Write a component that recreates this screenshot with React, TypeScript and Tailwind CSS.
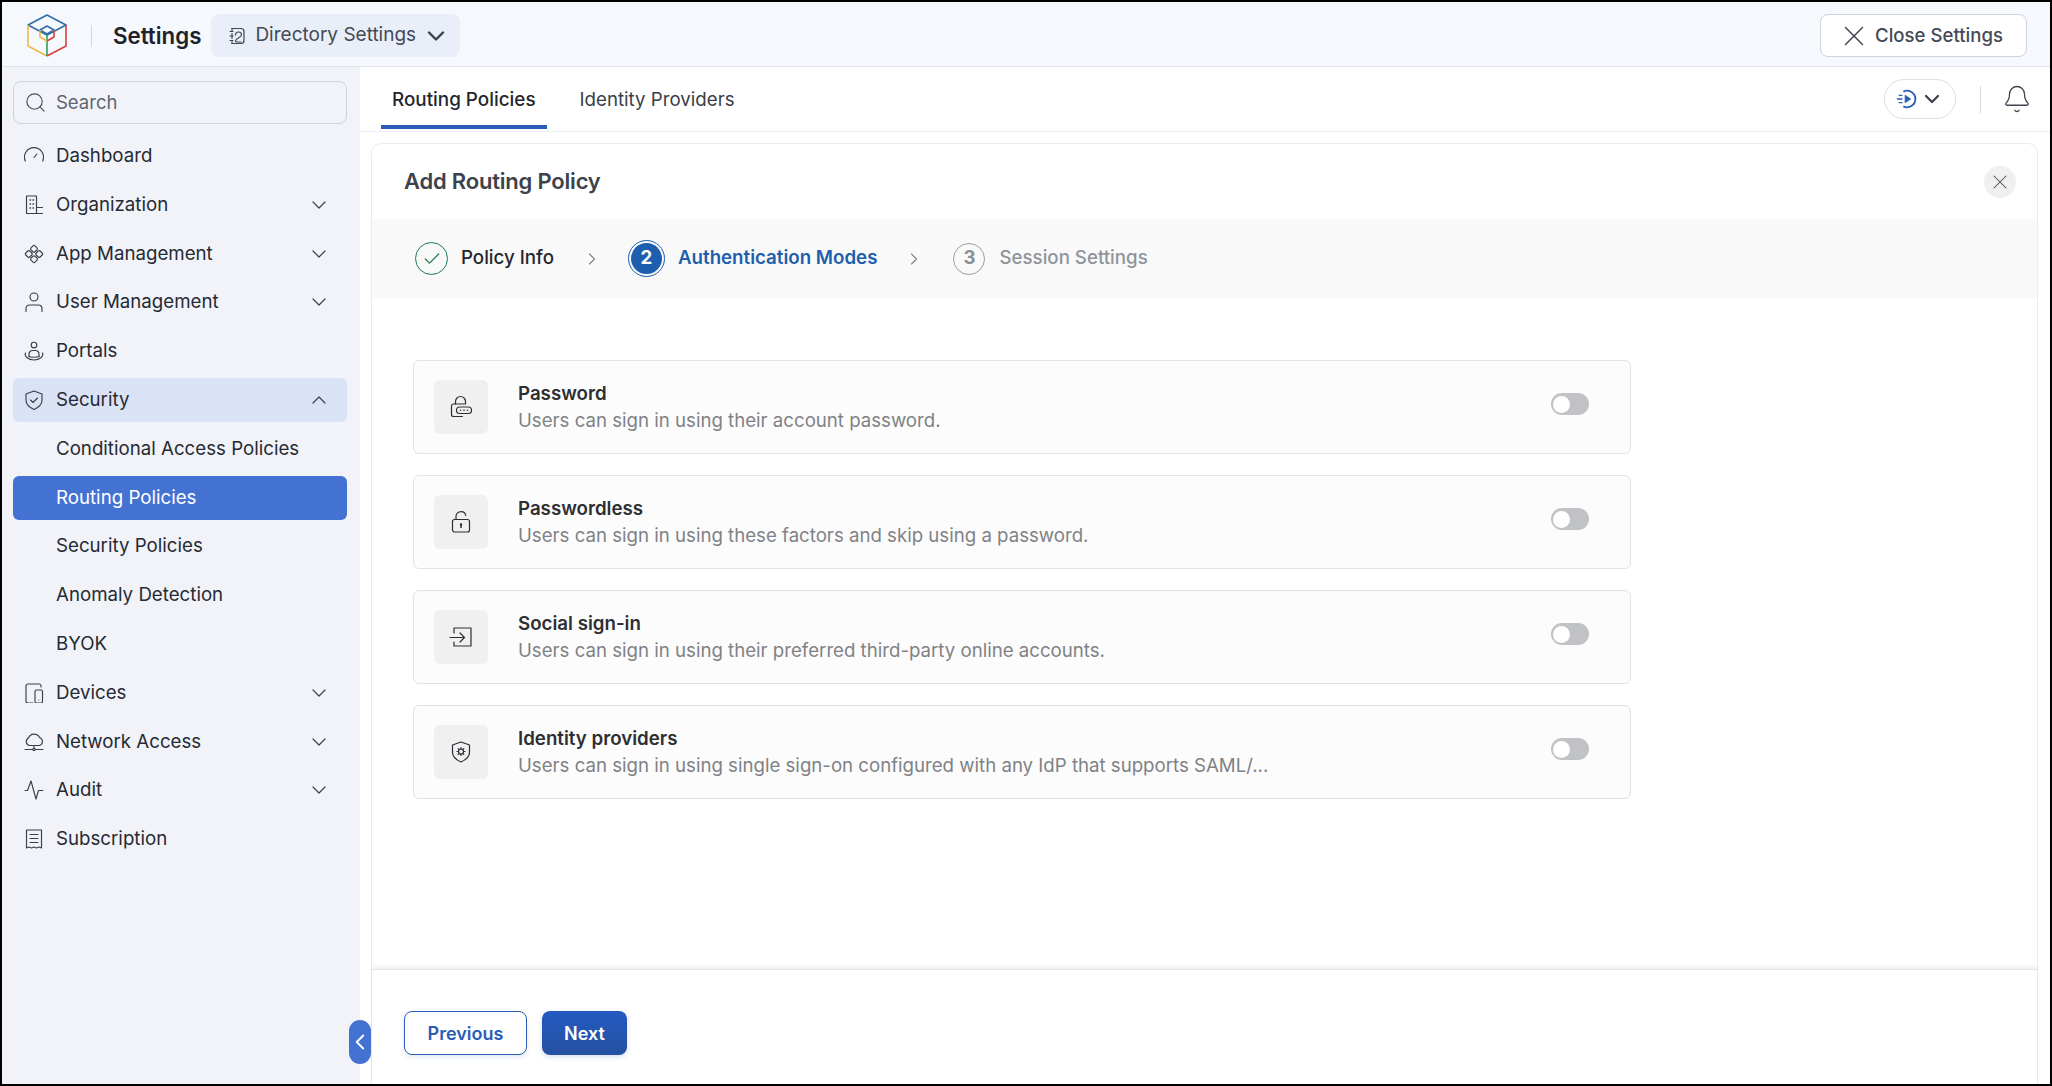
import { ChevronDown, ChevronLeft, ChevronRight, ChevronUp, Search, X, Check, Bell } from "lucide-react";
import { ReactNode } from "react";

// --- Icons ---
const Svg = ({ children, className = "w-[20px] h-[20px]" }: { children: ReactNode; className?: string }) => (
  <svg viewBox="0 0 20 20" fill="none" stroke="currentColor" strokeWidth="1.15" strokeLinecap="round" strokeLinejoin="round" className={className}>
    {children}
  </svg>
);

const Logo = () => (
  <svg viewBox="0 0 40 44" fill="none" strokeWidth="1.6" strokeLinejoin="round" className="w-[40px] h-[44px]">
    <path d="M1 11 20 1l19 10-19 10z" stroke="#2f6ea8" />
    <path d="M1 11v21l19 10" stroke="#f0b84a" />
    <path d="M39 11v21L20 42" stroke="#d9423c" />
    <path d="M20 21v21" stroke="#2e9e5b" />
    <path d="M13 16l7-4 7 4-7 4z" stroke="#2f6ea8" />
    <path d="M13 16v7l7 4" stroke="#f0b84a" />
    <path d="M27 16v7l-7 4" stroke="#d9423c" />
  </svg>
);

const DirectoryIcon = () => (
  <svg viewBox="0 0 20 20" fill="none" stroke="#3f4654" strokeWidth="1.2" strokeLinecap="round" className="w-[20px] h-[20px]">
    <path d="M5 2.500h9a3 3 0 0 1 3 3v9a3 3 0 0 1-3 3H5" />
    <path d="M5 2.500v2M5 7.500v5M5 15.500v2" />
    <path d="M3 5.500h3M3 10h3M3 14.500h3" />
    <path d="M8.500 9c0-4 6-4 6 0 0 2.500-6 3-6 6 0 .8.600 1 1.200 1H14" />
  </svg>
);

const iconClass = "w-[20px] h-[20px]";

const icons: Record<string, ReactNode> = {
  dashboard: (
    <Svg className={iconClass}>
      <path d="M1.300 15a9.500 9.500 0 1 1 17.400 0" />
      <path d="M10 11.500 13 8" />
    </Svg>
  ),
  organization: (
    <Svg className={iconClass}>
      <path d="M12.500 18.500H2.500V1h10v17.500" />
      <path d="M6 5h.5M9 5h.5M6 9h.5M9 9h.5M6 13h.5M9 13h.5" strokeWidth="1.500" />
      <path d="M12.500 12.500h6M12.500 18.500h6" />
    </Svg>
  ),
  apps: (
    <Svg className={iconClass}>
      <rect x="7.200" y="2" width="5.600" height="5.600" rx="1.400" transform="rotate(45 10 4.800)" />
      <rect x="7.200" y="12.400" width="5.600" height="5.600" rx="1.400" transform="rotate(45 10 15.200)" />
      <rect x="2" y="7.200" width="5.600" height="5.600" rx="1.400" transform="rotate(45 4.800 10)" />
      <rect x="12.400" y="7.200" width="5.600" height="5.600" rx="1.400" transform="rotate(45 15.200 10)" />
    </Svg>
  ),
  user: (
    <Svg className={iconClass}>
      <circle cx="10" cy="5" r="4" />
      <path d="M2 19.500V16.500a3.500 3.500 0 0 1 3.500-3.500h9a3.500 3.500 0 0 1 3.500 3.500v3" />
    </Svg>
  ),
  portals: (
    <Svg className={iconClass}>
      <circle cx="10" cy="4" r="2.800" />
      <path d="M5 15.500V13a3.500 3.500 0 0 1 3.500-3.500h3A3.500 3.500 0 0 1 15 13v2.500" />
      <path d="M1.500 12c-1.500 3.500 3 7 8.500 7s10-3.500 8.500-7" />
      <path d="M5 15.500c2 1 8 1 10 0" />
    </Svg>
  ),
  security: (
    <Svg className={iconClass}>
      <path d="M10 1 18 4v6c0 4.500-3.500 7.500-8 9.500-4.500-2-8-5-8-9.500V4z" />
      <path d="M6.500 10 9 12.500l4.500-4.500" />
    </Svg>
  ),
  devices: (
    <Svg className={iconClass}>
      <path d="M17 4V3a2 2 0 0 0-2-2H4a2 2 0 0 0-2 2v15a2 2 0 0 0 2 2h5" />
      <rect x="11" y="7" width="7.500" height="13" rx="1.500" />
      <path d="M14.800 17h.01" />
    </Svg>
  ),
  network: (
    <Svg className={iconClass}>
      <path d="M5.500 13.500a4 4 0 0 1-1-7.500 6 6 0 0 1 11-.5 4.200 4.200 0 0 1 0 8z" />
      <path d="M10 13.500v3" />
      <circle cx="10" cy="17.500" r="1.200" />
      <path d="M1 17.500h7.500M11.500 17.500H19" />
    </Svg>
  ),
  audit: (
    <Svg className={iconClass}>
      <path d="M1 10.500h2.500L7 1l5 18 2.500-8.500H19" />
    </Svg>
  ),
  subscription: (
    <Svg className={iconClass}>
      <path d="M2.500 19V1h15v18l-2.500-1-2.500 1-2.500-1-2.500 1-2.500-1z" />
      <path d="M6 5.500h8M6 9.500h8M6 13.500h8" />
    </Svg>
  ),
};

const cardIcons: Record<string, ReactNode> = {
  password: (
    <svg viewBox="0 0 24 24" fill="none" stroke="#2a2e35" strokeWidth="1.2" strokeLinecap="round" className="w-[24px] h-[24px]">
      <path d="M6.500 9V6.500a5 5 0 0 1 10 0V9" />
      <path d="M15.500 9H4.500a2 2 0 0 0-2 2v8.500a2 2 0 0 0 2 2h9" />
      <rect x="7.500" y="12" width="15" height="6.500" rx="3.250" />
      <path d="M11.500 15.250h.01M15 15.250h.01M18.500 15.250h.01" strokeWidth="1.600" />
    </svg>
  ),
  passwordless: (
    <svg viewBox="0 0 24 24" fill="none" stroke="#2a2e35" strokeWidth="1.2" strokeLinecap="round" className="w-[24px] h-[24px]">
      <rect x="3.500" y="9.500" width="17" height="12.500" rx="2" />
      <path d="M7 9.500V6.500a5 5 0 0 1 9.800-1.200" />
      <path d="M12 14.500v3" strokeWidth="1.500" />
      <circle cx="12" cy="14.500" r=".6" fill="#2a2e35" />
    </svg>
  ),
  social: (
    <svg viewBox="0 0 24 24" fill="none" stroke="#2a2e35" strokeWidth="1.2" strokeLinecap="round" strokeLinejoin="round" className="w-[24px] h-[24px]">
      <path d="M5 8V3h17v18H5v-4" />
      <path d="M1 12.500h14M11 8l4.500 4.500L11 17" />
    </svg>
  ),
  idp: (
    <svg viewBox="0 0 24 24" fill="none" stroke="#2a2e35" strokeWidth="1.2" strokeLinecap="round" strokeLinejoin="round" className="w-[24px] h-[24px]">
      <path d="M12 2 20.500 5v7.500c0 4.500-4 7.500-8.500 9.500-4.500-2-8.500-5-8.500-9.500V5z" />
      <circle cx="12" cy="11.500" r="2.500" />
      <path d="M12 7.500v1.500M12 14v1.500M8 11.500h1.500M14.500 11.500H16M9.200 8.700l1 1M13.800 13.300l1 1M14.800 8.700l-1 1M10.200 13.300l-1 1" />
    </svg>
  ),
};

// --- Sidebar ---
const navItems: { label: string; icon?: string; chevron?: "down" | "up"; state?: "open" | "active" }[] = [
  { label: "Dashboard", icon: "dashboard" },
  { label: "Organization", icon: "organization", chevron: "down" },
  { label: "App Management", icon: "apps", chevron: "down" },
  { label: "User Management", icon: "user", chevron: "down" },
  { label: "Portals", icon: "portals" },
  { label: "Security", icon: "security", chevron: "up", state: "open" },
  { label: "Conditional Access Policies" },
  { label: "Routing Policies", state: "active" },
  { label: "Security Policies" },
  { label: "Anomaly Detection" },
  { label: "BYOK" },
  { label: "Devices", icon: "devices", chevron: "down" },
  { label: "Network Access", icon: "network", chevron: "down" },
  { label: "Audit", icon: "audit", chevron: "down" },
  { label: "Subscription", icon: "subscription" },
];

const NavRow = ({ item }: { item: (typeof navItems)[number] }) => {
  const bg =
    item.state === "active"
      ? "bg-[#4472d2] text-white"
      : item.state === "open"
        ? "bg-[#dae3f5] text-[#262a33]"
        : "text-[#262a33]";
  return (
    <div className={`flex items-center h-[44px] mb-[4.8px] rounded-[6px] pl-[11px] pr-[16px] ${bg}`}>
      <span className="w-[20px] flex justify-center shrink-0 text-[#3a3f4a]">{item.icon && icons[item.icon]}</span>
      <span className="ml-[12px] text-[18.7px] flex-1">{item.label}</span>
      {item.chevron === "down" && <ChevronDown className="w-[24px] h-[24px] text-[#3a3f4a]" strokeWidth={1.2} />}
      {item.chevron === "up" && <ChevronUp className="w-[24px] h-[24px] text-[#3a3f4a]" strokeWidth={1.2} />}
    </div>
  );
};

const Sidebar = () => (
  <aside className="w-[358px] shrink-0 bg-[#f1f3f9] pl-[11px] pr-[13px] pt-[14px]">
    <div className="flex items-center h-[43px] rounded-[8px] border border-[#cfd3da] pl-[10px] mb-[10px]">
      <Search className="w-[23px] h-[23px] text-[#4a4f5a]" strokeWidth={1.2} />
      <span className="ml-[9px] text-[18.5px] text-[#5e6470]">Search</span>
    </div>
    {navItems.map((item) => (
      <NavRow key={item.label} item={item} />
    ))}
  </aside>
);

// --- Steps ---
const Steps = () => (
  <div className="flex items-center h-[79px] shrink-0 bg-[#f9f9f9] pl-[43px] text-[18.7px] font-medium">
    <span className="flex items-center justify-center w-[33px] h-[33px] rounded-full border border-[#1f7a4d] text-[#1f7a4d]">
      <Check className="w-[20px] h-[20px]" strokeWidth={1.5} />
    </span>
    <span className="ml-[13px] text-[#23262d]">Policy Info</span>
    <ChevronRight className="w-[20px] h-[20px] ml-[28px] text-[#7d828c]" strokeWidth={1.3} />
    <span className="ml-[26px] flex items-center justify-center w-[37px] h-[37px] rounded-full border border-[#1d5fae] p-[2px]">
      <span className="flex items-center justify-center w-full h-full rounded-full bg-[#1d5fae] text-white font-bold">2</span>
    </span>
    <span className="ml-[13px] text-[#1d5fae] font-semibold">Authentication Modes</span>
    <ChevronRight className="w-[20px] h-[20px] ml-[27px] text-[#7d828c]" strokeWidth={1.3} />
    <span className="ml-[29px] flex items-center justify-center w-[32px] h-[32px] rounded-full border border-[#9a9ea6] text-[#8b8f97] font-bold">3</span>
    <span className="ml-[14px] text-[#8f939b]">Session Settings</span>
  </div>
);

// --- Auth mode cards ---
const modes = [
  { key: "password", title: "Password", text: "Users can sign in using their account password." },
  { key: "passwordless", title: "Passwordless", text: "Users can sign in using these factors and skip using a password." },
  { key: "social", title: "Social sign-in", text: "Users can sign in using their preferred third-party online accounts." },
  { key: "idp", title: "Identity providers", text: "Users can sign in using single sign-on configured with any IdP that supports SAML/..." },
];

const ModeCard = ({ mode }: { mode: (typeof modes)[number] }) => (
  <div className="flex items-center h-[94px] rounded-[6px] border border-[#e3e3e3] bg-[#fcfcfc] pl-[20px] pr-[41px]">
    <span className="flex items-center justify-center w-[54px] h-[54px] rounded-[6px] bg-[#f0f0f0]">{cardIcons[mode.key]}</span>
    <div className="ml-[30px] flex-1">
      <p className="text-[18.7px] leading-[26px] font-semibold text-[#2d2f33]">{mode.title}</p>
      <p className="text-[18.65px] leading-[27px] text-[#7f8286]">{mode.text}</p>
    </div>
    <span className="flex items-center w-[38px] h-[22px] mb-[6px] rounded-full bg-[#c0c2c5] pl-[2px]">
      <span className="w-[17px] h-[17px] rounded-full bg-white" />
    </span>
  </div>
);

export default function App() {
  return (
    <div
      className="relative flex flex-col w-[2052px] h-[1086px] border-2 border-black bg-white overflow-hidden"
      style={{ fontFamily: "Inter, 'Noto Sans', sans-serif" }}
    >
      {/* Header */}
      <header className="flex items-center h-[65px] shrink-0 bg-[#f5f8fc] border-b border-[#dfe2e8] pt-[3px] pl-[25px] pr-[23px]">
        <Logo />
        <span className="w-px h-[22px] bg-[#d5d7dc] ml-[24px]" />
        <span className="ml-[21px] text-[22.3px] font-semibold text-[#1f2229]">Settings</span>
        <div className="ml-[10px] flex items-center h-[43px] rounded-[8px] bg-[#e9eef8] pl-[16px] pr-[10px]">
          <DirectoryIcon />
          <span className="ml-[8px] text-[19px] text-[#444a56]">Directory Settings</span>
          <ChevronDown className="ml-[6px] w-[28px] h-[28px] text-[#3a3f4a]" strokeWidth={2.1} />
        </div>
        <button className="ml-auto flex items-center h-[43px] w-[207px] rounded-[8px] border border-[#cfd3da] bg-white pl-[16px]">
          <X className="w-[34px] h-[34px] text-[#3f4450]" strokeWidth={1.05} />
          <span className="ml-[4px] text-[18.6px] font-medium text-[#444a56]">Close Settings</span>
        </button>
      </header>

      <div className="flex flex-1 min-h-0">
        <Sidebar />

        <main className="flex flex-col flex-1 min-w-0">
          {/* Tabs */}
          <div className="flex items-center h-[65px] shrink-0 border-b border-[#e9ebef] pl-[21px] pr-[18px]">
            <div className="relative flex items-center h-full pt-[3px] px-[11px] text-[18.85px] font-medium text-[#23262d]">
              Routing Policies
              <span className="absolute left-0 right-0 bottom-[2px] h-[4px] bg-[#2a5cb8]" />
            </div>
            <div className="ml-[33px] flex items-center h-full pt-[3px] text-[18.7px] text-[#3a3e47]">Identity Providers</div>
            <div className="ml-auto flex items-center">
              <div className="flex items-center justify-center gap-[2px] w-[72px] h-[40px] rounded-full border border-[#dcdfe5]">
                <svg viewBox="0 0 24 24" fill="none" stroke="#2a5cb8" strokeWidth="2" className="w-[22px] h-[22px]">
                  <path d="M8 4a9 9 0 1 1 0 16" />
                  <path d="M10 8v8l6-4z" fill="#2a5cb8" strokeWidth="1" />
                  <path d="M3 8h4M1 12h6M3 16h4" strokeWidth="1.500" />
                </svg>
                <ChevronDown className="w-[24px] h-[24px] text-[#3a3f4a]" strokeWidth={2.2} />
              </div>
              <span className="w-px h-[27px] bg-[#d5d7dc] ml-[24px]" />
              <Bell className="ml-[21px] w-[30px] h-[30px] text-[#3f4450]" strokeWidth={1.05} />
            </div>
          </div>

          {/* Panel */}
          <div className="flex-1 min-h-0 ml-[11px] mr-[12px] mt-[11px] flex flex-col rounded-t-[10px] border border-b-0 border-[#e9ecf2]">
            <div className="flex items-center justify-between h-[75px] shrink-0 pl-[32px] pr-[21px]">
              <h1 className="text-[22px] font-semibold text-[#3e424b] tracking-[-0.2px]">Add Routing Policy</h1>
              <span className="flex items-center justify-center w-[32px] h-[32px] rounded-full bg-[#f0f0f0]">
                <X className="w-[24px] h-[24px] text-[#4a4f5a]" strokeWidth={1.05} />
              </span>
            </div>
            <Steps />

            <div className="flex-1 min-h-0 pt-[62px] pl-[41px]">
              <div className="flex flex-col gap-[21px] w-[1218px]">
                {modes.map((mode) => (
                  <ModeCard key={mode.key} mode={mode} />
                ))}
              </div>
            </div>

            {/* Footer */}
            <div className="flex items-start gap-[15px] h-[115px] shrink-0 border-t border-[#e2e2e2] shadow-[0_-3px_4px_rgba(0,0,0,0.06)] pl-[32px] pt-[41px]">
              <button className="w-[123px] h-[44px] rounded-[8px] border-[1.5px] border-[#2a5cb8] bg-white text-[18px] font-semibold text-[#2a5cb8] shadow-[0_2px_5px_rgba(42,92,184,0.15)]">
                Previous
              </button>
              <button className="w-[85px] h-[44px] rounded-[8px] bg-gradient-to-b from-[#255ac2] to-[#24509f] text-[18px] font-semibold text-white shadow-[0_2px_5px_rgba(42,92,184,0.2)]">
                Next
              </button>
            </div>
          </div>
        </main>
      </div>

      {/* Sidebar collapse handle */}
      <div className="absolute left-[347px] top-[1018px] flex items-center justify-center w-[22px] h-[44px] rounded-full bg-[#4472d2]">
        <ChevronLeft className="w-[26px] h-[26px] text-white shrink-0" strokeWidth={1.8} />
      </div>
    </div>
  );
}
